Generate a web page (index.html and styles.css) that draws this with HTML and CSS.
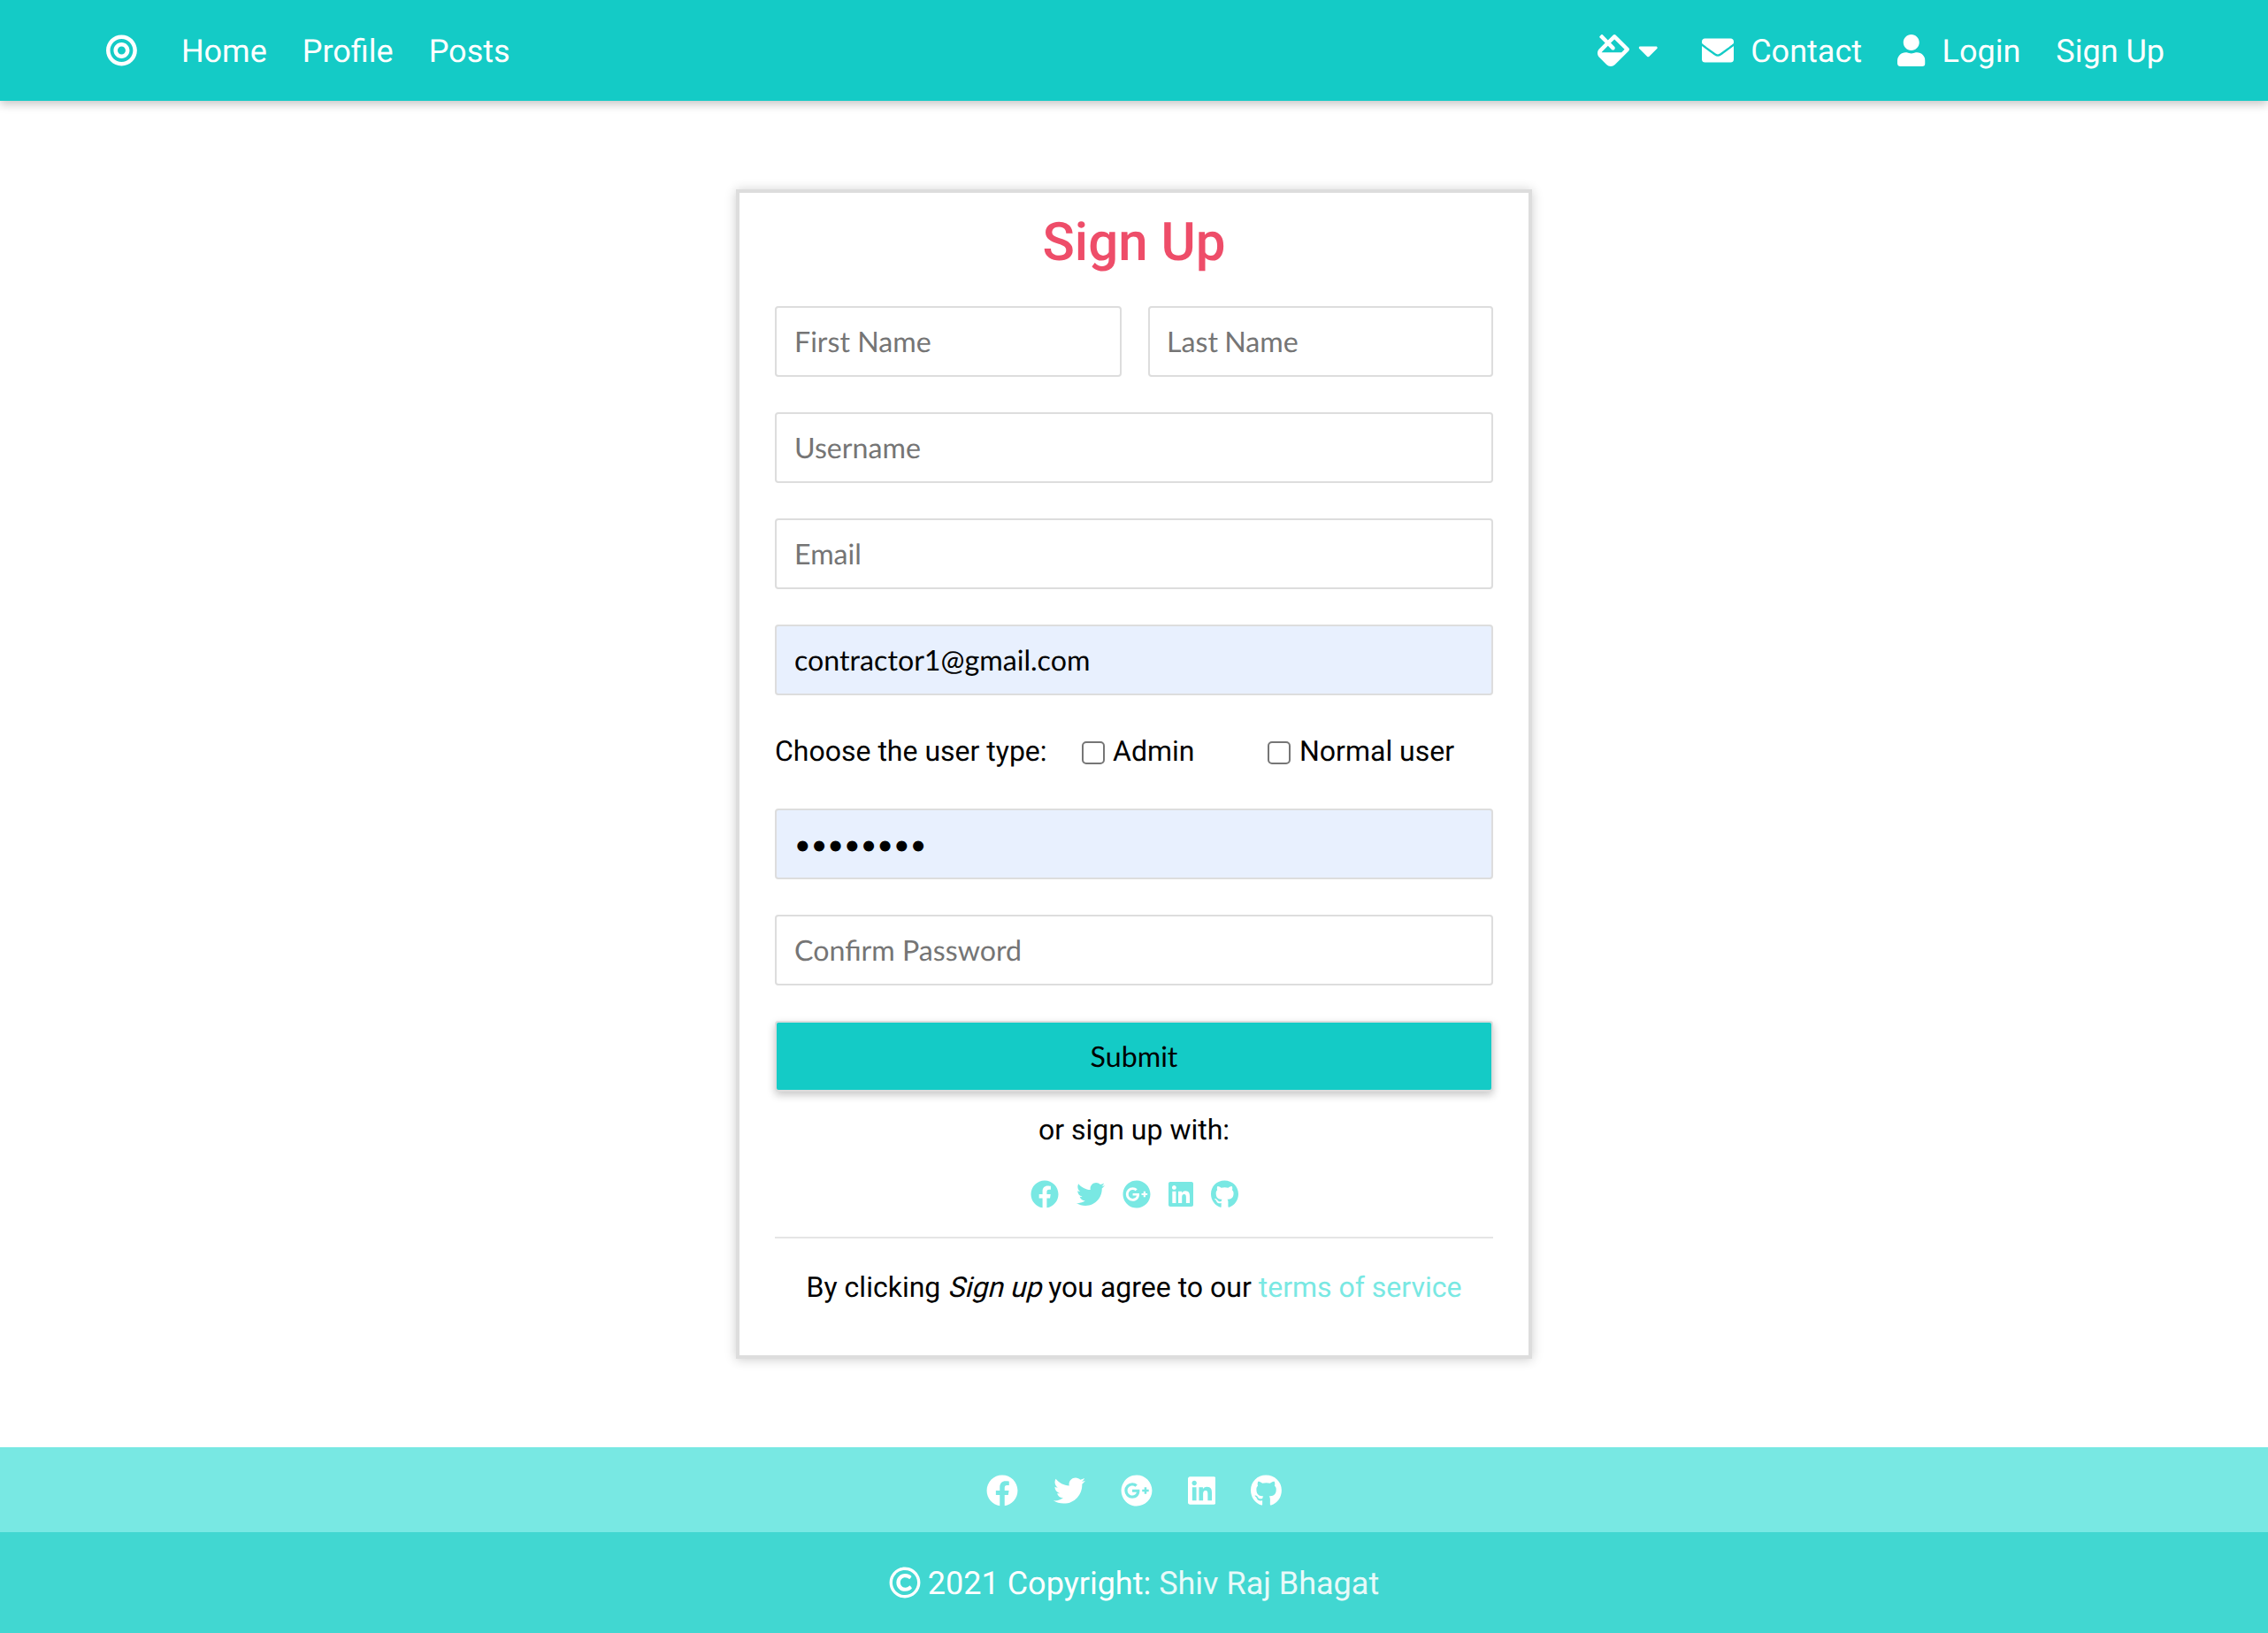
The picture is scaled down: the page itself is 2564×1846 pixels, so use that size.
FILE: index.html
```html
<!DOCTYPE html>
<html lang="en">
<head>
<meta charset="utf-8">
<title>Sign Up</title>
<link rel="stylesheet" href="styles.css">
</head>
<body>
<svg class="sprite" aria-hidden="true">
  <symbol id="bullseye" viewBox="0 0 496 512"><path d="M248 8C111.03 8 0 119.03 0 256s111.03 248 248 248 248-111.03 248-248S384.97 8 248 8zm0 432c-101.69 0-184-82.29-184-184 0-101.69 82.29-184 184-184 101.69 0 184 82.29 184 184 0 101.69-82.29 184-184 184zm0-312c-70.69 0-128 57.31-128 128s57.31 128 128 128 128-57.31 128-128-57.31-128-128-128zm0 192c-35.29 0-64-28.71-64-64s28.71-64 64-64 64 28.71 64 64-28.71 64-64 64z"/></symbol>
  <symbol id="fill" viewBox="0 0 512 512"><path d="M502.63 217.06L294.94 9.37C288.69 3.12 280.5 0 272.31 0s-16.38 3.12-22.62 9.37l-81.58 81.58L81.93 4.77c-6.24-6.25-16.38-6.25-22.62 0L36.69 27.38c-6.24 6.25-6.24 16.38 0 22.63l86.19 86.18-94.76 94.76c-37.49 37.49-37.49 98.26 0 135.75l117.19 117.19c18.75 18.74 43.31 28.12 67.87 28.12 24.57 0 49.13-9.37 67.88-28.12l221.57-221.57c12.49-12.5 12.49-32.76 0-45.26zm-116.22 70.97H65.93c1.36-3.84 3.57-7.98 7.43-11.83l13.15-13.15 81.61-81.61 58.61 58.6c12.49 12.49 32.75 12.49 45.24 0 12.49-12.49 12.49-32.75 0-45.24l-58.61-58.6 58.95-58.95 162.45 162.44-48.35 48.34z"/></symbol>
  <symbol id="caret" viewBox="0 0 320 512"><path d="M31.3 192h257.3c17.8 0 26.7 21.5 14.1 34.1L174.1 354.8c-7.8 7.8-20.5 7.8-28.3 0L17.2 226.1C4.6 213.5 13.5 192 31.3 192z"/></symbol>
  <symbol id="envelope" viewBox="0 0 512 512"><path d="M502.3 190.8c3.9-3.1 9.7-.2 9.7 4.7V400c0 26.5-21.5 48-48 48H48c-26.5 0-48-21.5-48-48V195.6c0-5 5.7-7.8 9.7-4.7 22.4 17.4 52.1 39.5 154.1 113.6 21.1 15.4 56.7 47.8 92.2 47.6 35.7.3 72-32.8 92.3-47.6 102-74.1 131.6-96.3 154-113.7zM256 320c23.2.4 56.6-29.2 73.4-41.4 132.7-96.3 142.8-104.7 173.4-128.7 5.8-4.5 9.2-11.5 9.2-18.9v-19c0-26.5-21.5-48-48-48H48c-26.5 0-48 21.5-48 48v19c0 7.4 3.4 14.3 9.2 18.9 30.6 23.9 40.7 32.4 173.4 128.7 16.8 12.2 50.2 41.8 73.4 41.4z"/></symbol>
  <symbol id="user" viewBox="0 0 448 512"><path d="M224 256c70.7 0 128-57.3 128-128S294.7 0 224 0 96 57.3 96 128s57.3 128 128 128zm89.6 32h-16.7c-22.2 10.2-46.9 16-72.9 16s-50.6-5.8-72.9-16h-16.7C60.2 288 0 348.2 0 422.4V464c0 26.5 21.5 48 48 48h352c26.5 0 48-21.5 48-48v-41.6c0-74.2-60.2-134.4-134.4-134.4z"/></symbol>
  <symbol id="facebook" viewBox="0 0 512 512"><path d="M504 256C504 119 393 8 256 8S8 119 8 256c0 123.78 90.69 226.38 209.25 245V327.69h-63V256h63v-54.64c0-62.15 37-96.48 93.67-96.48 27.14 0 55.52 4.84 55.52 4.84v61h-31.28c-30.8 0-40.41 19.12-40.41 38.73V256h68.78l-11 71.69h-57.78V501C413.31 482.38 504 379.78 504 256z"/></symbol>
  <symbol id="twitter" viewBox="0 0 512 512"><path d="M459.37 151.716c.325 4.548.325 9.097.325 13.645 0 138.72-105.583 298.558-298.558 298.558-59.452 0-114.68-17.219-161.137-47.106 8.447.974 16.568 1.299 25.34 1.299 49.055 0 94.213-16.568 130.274-44.832-46.132-.975-84.792-31.188-98.112-72.772 6.498.974 12.995 1.624 19.818 1.624 9.421 0 18.843-1.3 27.614-3.573-48.081-9.747-84.143-51.98-84.143-102.985v-1.299c13.969 7.797 30.214 12.67 47.431 13.319-28.264-18.843-46.781-51.005-46.781-87.391 0-19.492 5.197-37.36 14.294-52.954 51.655 63.675 129.3 105.258 216.365 109.807-1.624-7.797-2.599-15.918-2.599-24.04 0-57.828 46.782-104.934 104.934-104.934 30.213 0 57.502 12.67 76.67 33.137 23.715-4.548 46.456-13.32 66.599-25.34-7.798 24.366-24.366 44.833-46.132 57.827 21.117-2.273 41.584-8.122 60.426-16.243-14.292 20.791-32.161 39.308-52.628 54.253z"/></symbol>
  <symbol id="gplus" viewBox="0 0 512 512"><path d="M256,8C119.1,8,8,119.1,8,256S119.1,504,256,504,504,392.9,504,256,392.9,8,256,8ZM185.3,380a124,124,0,0,1,0-248c31.3,0,60.1,11,83,32.3l-33.6,32.6c-13.2-12.9-31.3-19.1-49.4-19.1-42.9,0-77.2,35.5-77.2,78.1S142.3,334,185.3,334c32.6,0,64.9-19.1,70.1-53.3H185.3V238.1H302.2a109.2,109.2,0,0,1,1.9,20.7c0,70.8-47.5,121.2-118.8,121.2ZM415.5,273.8v35.5H380V273.8H344.5V238.3H380V202.8h35.5v35.5h35.2v35.5Z"/></symbol>
  <symbol id="linkedin" viewBox="0 0 448 512"><path d="M416 32H31.9C14.3 32 0 46.5 0 64.3v383.4C0 465.5 14.3 480 31.9 480H416c17.6 0 32-14.5 32-32.3V64.3c0-17.8-14.4-32.3-32-32.3zM135.4 416H69V202.2h66.5V416zm-33.2-243c-21.3 0-38.5-17.3-38.5-38.5S80.9 96 102.2 96c21.2 0 38.5 17.3 38.5 38.5 0 21.3-17.2 38.5-38.5 38.5zm282.1 243h-66.4V312c0-24.8-.5-56.7-34.5-56.7-34.6 0-39.9 27-39.9 54.9V416h-66.4V202.2h63.7v29.2h.9c8.9-16.8 30.6-34.5 62.9-34.5 67.2 0 79.7 44.3 79.7 101.9V416z"/></symbol>
  <symbol id="github" viewBox="0 0 496 512"><path d="M244.8 8C106.1 8 0 113.3 0 252c0 110.9 69.8 205.8 169.5 239.2 12.8 2.3 17.3-5.6 17.3-12.1 0-6.2-.3-40.4-.3-61.4 0 0-70 15-84.7-29.8 0 0-11.4-29.1-27.8-36.6 0 0-22.9-15.7 1.6-15.4 0 0 24.9 2 38.6 25.8 21.9 38.6 58.6 27.5 72.9 20.9 2.3-16 8.8-27.1 16-33.7-55.9-6.2-112.3-14.3-112.3-110.5 0-27.5 7.6-41.3 23.6-58.9-2.6-6.5-11.1-33.3 2.6-67.9 20.9-6.5 69 27 69 27 20-5.6 41.5-8.5 62.8-8.5s42.8 2.9 62.8 8.5c0 0 48.1-33.6 69-27 13.7 34.7 5.2 61.4 2.6 67.9 16 17.7 25.8 31.5 25.8 58.9 0 96.5-58.9 104.2-114.8 110.5 9.2 7.9 17 22.9 17 46.4 0 33.7-.3 75.4-.3 83.6 0 6.5 4.6 14.4 17.3 12.1C428.2 457.8 496 362.9 496 252 496 113.3 383.5 8 244.8 8z"/></symbol>
  <symbol id="copyright" viewBox="0 0 512 512"><path d="M256 8C119.033 8 8 119.033 8 256s111.033 248 248 248 248-111.033 248-248S392.967 8 256 8zm0 448c-110.532 0-200-89.451-200-200 0-110.531 89.451-200 200-200 110.532 0 200 89.451 200 200 0 110.532-89.451 200-200 200zm107.351-101.064c-9.614 9.712-45.53 41.396-104.065 41.396-82.43 0-140.484-61.425-140.484-141.567 0-79.152 60.275-139.401 139.762-139.401 55.531 0 88.738 26.62 97.593 34.779a11.965 11.965 0 0 1 1.936 15.322l-18.155 28.113c-3.841 5.95-11.966 7.282-17.499 2.921-8.595-6.776-31.814-22.538-61.708-22.538-48.303 0-77.916 35.33-77.916 80.082 0 41.589 26.888 83.692 78.277 83.692 32.657 0 56.843-19.039 65.726-27.225 5.27-4.857 13.596-4.039 17.82 1.738l19.865 27.17a11.947 11.947 0 0 1-1.152 15.518z"/></symbol>
</svg>

<header class="navbar">
  <nav class="nav-left">
    <a class="brand"><svg class="icon w496"><use href="#bullseye"/></svg></a>
    <a class="link">Home</a>
    <a class="link">Profile</a>
    <a class="link">Posts</a>
  </nav>
  <nav class="nav-right">
    <a class="theme"><svg class="icon"><use href="#fill"/></svg><svg class="icon w320"><use href="#caret"/></svg></a>
    <a class="with-icon"><svg class="icon"><use href="#envelope"/></svg><span class="link">Contact</span></a>
    <a class="with-icon"><svg class="icon w448"><use href="#user"/></svg><span class="link">Login</span></a>
    <a class="link">Sign Up</a>
  </nav>
</header>

<main class="main">
  <form class="card">
    <h1 class="title">Sign Up</h1>
    <div class="fields">
      <div class="names">
        <input class="field" type="text" placeholder="First Name">
        <input class="field last-name" type="text" placeholder="Last Name">
      </div>
      <input class="field" type="text" placeholder="Username">
      <input class="field" type="text" placeholder="Email">
      <input class="field filled" type="text" value="contractor1@gmail.com">
    </div>
    <div class="types">
      <span class="types-label">Choose the user type:</span>
      <label class="check admin"><input type="checkbox">Admin</label>
      <label class="check"><input type="checkbox">Normal user</label>
    </div>
    <div class="fields">
      <input class="field filled" type="password" value="password">
      <input class="field" type="password" placeholder="Confirm Password">
      <button class="submit" type="button">Submit</button>
    </div>
    <p class="alt">or sign up with:</p>
    <div class="social">
      <svg class="icon"><use href="#facebook"/></svg>
      <svg class="icon"><use href="#twitter"/></svg>
      <svg class="icon"><use href="#gplus"/></svg>
      <svg class="icon w448"><use href="#linkedin"/></svg>
      <svg class="icon w496"><use href="#github"/></svg>
    </div>
    <p class="terms">By clicking <em>Sign up</em> you agree to our <a>terms of service</a></p>
  </form>
</main>

<footer>
  <div class="footer-social">
    <svg class="icon"><use href="#facebook"/></svg>
    <svg class="icon"><use href="#twitter"/></svg>
    <svg class="icon"><use href="#gplus"/></svg>
    <svg class="icon w448"><use href="#linkedin"/></svg>
    <svg class="icon w496"><use href="#github"/></svg>
  </div>
  <div class="copyright">
    <svg class="icon"><use href="#copyright"/></svg>
    <span class="link">2021 Copyright: <a>Shiv Raj Bhagat</a></span>
  </div>
</footer>
</body>
</html>
```
FILE: styles.css
```css
* { box-sizing: border-box; margin: 0; padding: 0; }

body {
  min-height: 1846px;
  display: flex;
  flex-direction: column;
  background: #fff;
  color: #000;
  font-family: Roboto, sans-serif;
  font-size: 32px;
  text-rendering: geometricPrecision;
}

.sprite { display: none; }

.icon { width: 1em; height: 1em; fill: currentColor; flex: none; }
.icon.w496 { width: 0.96875em; }
.icon.w448 { width: 0.875em; }
.icon.w320 { width: 0.625em; }

.navbar {
  height: 114px;
  padding: 0 117px 0 120px;
  display: flex;
  justify-content: space-between;
  align-items: center;
  background: #14cbc6;
  color: #fff;
  font-size: 36px;
  line-height: 54px;
  box-shadow: 0 4px 10px rgba(0, 0, 0, 0.22);
}
.nav-left, .nav-right { display: flex; align-items: center; gap: 40px; }
.navbar a { display: flex; align-items: center; }
.link, .navbar a.link { padding-top: 2px; }
.brand { margin-right: 10px; }
.theme { gap: 10px; margin-right: 10px; }
.with-icon { gap: 19px; }

.main { flex: 1; display: flex; justify-content: center; padding-top: 100px; }

.card {
  width: 900px;
  height: 1322px;
  padding: 0 40px;
  border: 4px solid #ddd;
  box-shadow: 0 1px 12px rgba(0, 0, 0, 0.2);
}
.title {
  padding-top: 20px;
  margin-bottom: 36px;
  font-size: 60px;
  font-weight: 500;
  line-height: 72px;
  text-align: center;
  color: #ee4d69;
}
.fields { display: flex; flex-direction: column; gap: 40px; }
.names { display: grid; grid-template-columns: 392px 390px; gap: 30px; }

.field, .submit {
  width: 100%;
  height: 80px;
  padding: 0 20px 2px;
  border: 2px solid #ddd;
  border-radius: 4px;
  background: #fff;
  color: #000;
  font-family: Lato, sans-serif;
  font-size: 32.2px;
  text-rendering: geometricPrecision;
}
.field::placeholder { color: #757575; opacity: 1; }
.field.last-name { padding-left: 19px; word-spacing: -1px; }
.filled { background: #e8f0fe; }
.submit {
  background: #14cbc6;
  box-shadow: 0 4px 10px rgba(0, 0, 0, 0.22);
}

.types { height: 128px; display: flex; align-items: center; padding-bottom: 2px; }
.types-label { width: 347px; }
.check { display: flex; align-items: center; gap: 10px; }
.check.admin { width: 210px; gap: 9px; }
.check input {
  appearance: none;
  width: 26px;
  height: 26px;
  margin-top: 4px;
  border: 2px solid #767676;
  border-radius: 5px;
}

.alt { margin-top: 19px; line-height: 48px; text-align: center; }
.social {
  display: flex;
  justify-content: center;
  gap: 20px;
  margin-top: 33px;
  padding-bottom: 32px;
  border-bottom: 2px solid #e5e5e5;
  color: #79e8e3;
}
.terms { margin-top: 31px; line-height: 48px; text-align: center; }
.terms em {
  display: inline-block;
  font-style: normal;
  transform: skewX(-14deg);
  transform-origin: 0 74%;
}
.terms a { color: #79e8e3; }

.footer-social {
  height: 96px;
  padding-top: 1px;
  display: flex;
  justify-content: center;
  align-items: center;
  gap: 40px;
  background: #78e8e3;
  color: #fff;
  font-size: 36px;
}
.copyright {
  height: 114px;
  display: flex;
  justify-content: center;
  align-items: center;
  gap: 8px;
  background: #41d7d1;
  color: #fff;
  font-size: 36px;
}
.copyright a { color: #e8faf9; }
```
